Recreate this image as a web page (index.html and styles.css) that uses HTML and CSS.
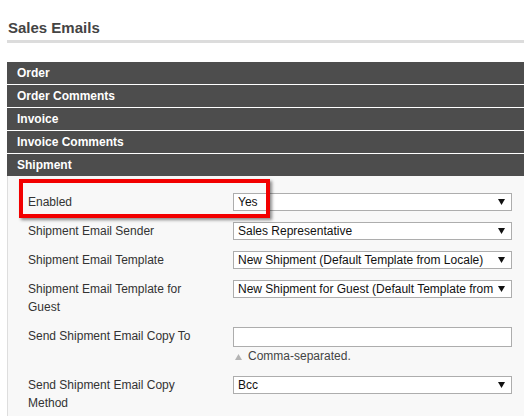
FILE: index.html
```html
<!DOCTYPE html>
<html>
<head>
<meta charset="utf-8">
<link rel="stylesheet" href="styles.css">
</head>
<body>
<div class="page">
  <h2 class="title">Sales Emails</h2>
  <div class="rule"></div>
  <div class="sections">
    <div class="bar">Order</div>
    <div class="bar">Order Comments</div>
    <div class="bar">Invoice</div>
    <div class="bar">Invoice Comments</div>
    <div class="bar">Shipment</div>
    <div class="panel">
      <div class="row">
        <div class="label">Enabled</div>
        <div class="control"><div class="select"><span class="val">Yes</span><svg class="arrow" width="7" height="6" viewBox="0 0 7 6"><path d="M0 0H7L3.5 6Z" fill="#111"/></svg></div></div>
      </div>
      <div class="row">
        <div class="label">Shipment Email Sender</div>
        <div class="control"><div class="select"><span class="val">Sales Representative</span><svg class="arrow" width="7" height="6" viewBox="0 0 7 6"><path d="M0 0H7L3.5 6Z" fill="#111"/></svg></div></div>
      </div>
      <div class="row">
        <div class="label">Shipment Email Template</div>
        <div class="control"><div class="select"><span class="val">New Shipment (Default Template from Locale)</span><svg class="arrow" width="7" height="6" viewBox="0 0 7 6"><path d="M0 0H7L3.5 6Z" fill="#111"/></svg></div></div>
      </div>
      <div class="row">
        <div class="label">Shipment Email Template for Guest</div>
        <div class="control"><div class="select"><span class="val">New Shipment for Guest (Default Template from</span><svg class="arrow" width="7" height="6" viewBox="0 0 7 6"><path d="M0 0H7L3.5 6Z" fill="#111"/></svg></div></div>
      </div>
      <div class="row">
        <div class="label">Send Shipment Email Copy To</div>
        <div class="control">
          <div class="input"></div>
          <div class="hint"><svg class="tri" width="7" height="6" viewBox="0 0 7 6"><path d="M0 6H7L3.5 0Z" fill="#b4b4b4"/></svg>Comma-separated.</div>
        </div>
      </div>
      <div class="row">
        <div class="label">Send Shipment Email Copy Method</div>
        <div class="control"><div class="select"><span class="val">Bcc</span><svg class="arrow" width="7" height="6" viewBox="0 0 7 6"><path d="M0 0H7L3.5 6Z" fill="#111"/></svg></div></div>
      </div>
    </div>
  </div>
  <div class="highlight"></div>
</div>
</body>
</html>
```
FILE: styles.css
```css
html, body {
  margin: 0;
  padding: 0;
  background: #fff;
}
body {
  font-family: "Liberation Sans", Arial, sans-serif;
  font-size: 12px;
  color: #333;
  overflow: hidden;
}
.page {
  position: relative;
  padding: 0 0 0 7px;
}
.title {
  margin: 0;
  padding: 19px 0 0 1px;
  font-size: 15px;
  line-height: 18px;
  font-weight: bold;
  color: #444;
}
.rule {
  margin-top: 3px;
  height: 3px;
  background: #dcdcdc;
}
.sections {
  margin-top: 19px;
  display: flex;
  flex-direction: column;
}
.bar {
  height: 22px;
  line-height: 22px;
  background: #4d4d4d;
  color: #fff;
  font-weight: bold;
  padding-left: 10px;
  margin-bottom: 1px;
}
.bar:nth-child(5) {
  margin-bottom: 0;
}
.panel {
  background: #f8f8f8;
  border-left: 1px solid #dedede;
  padding: 17px 12px 20px 20px;
  display: flex;
  flex-direction: column;
  gap: 11px;
}
.row {
  display: grid;
  grid-template-columns: 205px 279px;
  align-items: start;
}
.label {
  line-height: 18px;
  color: #333;
  padding-right: 20px;
}
.control {
  display: flex;
  flex-direction: column;
}
.select {
  box-sizing: border-box;
  height: 18px;
  background: #fff;
  border: 1px solid #adadad;
  display: flex;
  align-items: center;
  padding: 0 6px 0 4px;
  color: #111;
  overflow: hidden;
}
.val {
  flex: 1;
  white-space: nowrap;
  overflow: hidden;
  line-height: 16px;
}
.arrow {
  flex: none;
  margin-left: 4px;
}
.input {
  box-sizing: border-box;
  height: 20px;
  background: #fff;
  border: 1px solid #adadad;
}
.hint {
  margin-top: 1px;
  line-height: 17px;
  color: #444;
  display: flex;
  align-items: center;
}
.tri {
  margin: 0 6px 0 2px;
}
.highlight {
  position: absolute;
  left: 19px;
  top: 179px;
  width: 251px;
  height: 39px;
  box-sizing: border-box;
  border: 4px solid #f20000;
  box-shadow: 2px 2px 3px rgba(0, 0, 0, 0.45);
}
```
